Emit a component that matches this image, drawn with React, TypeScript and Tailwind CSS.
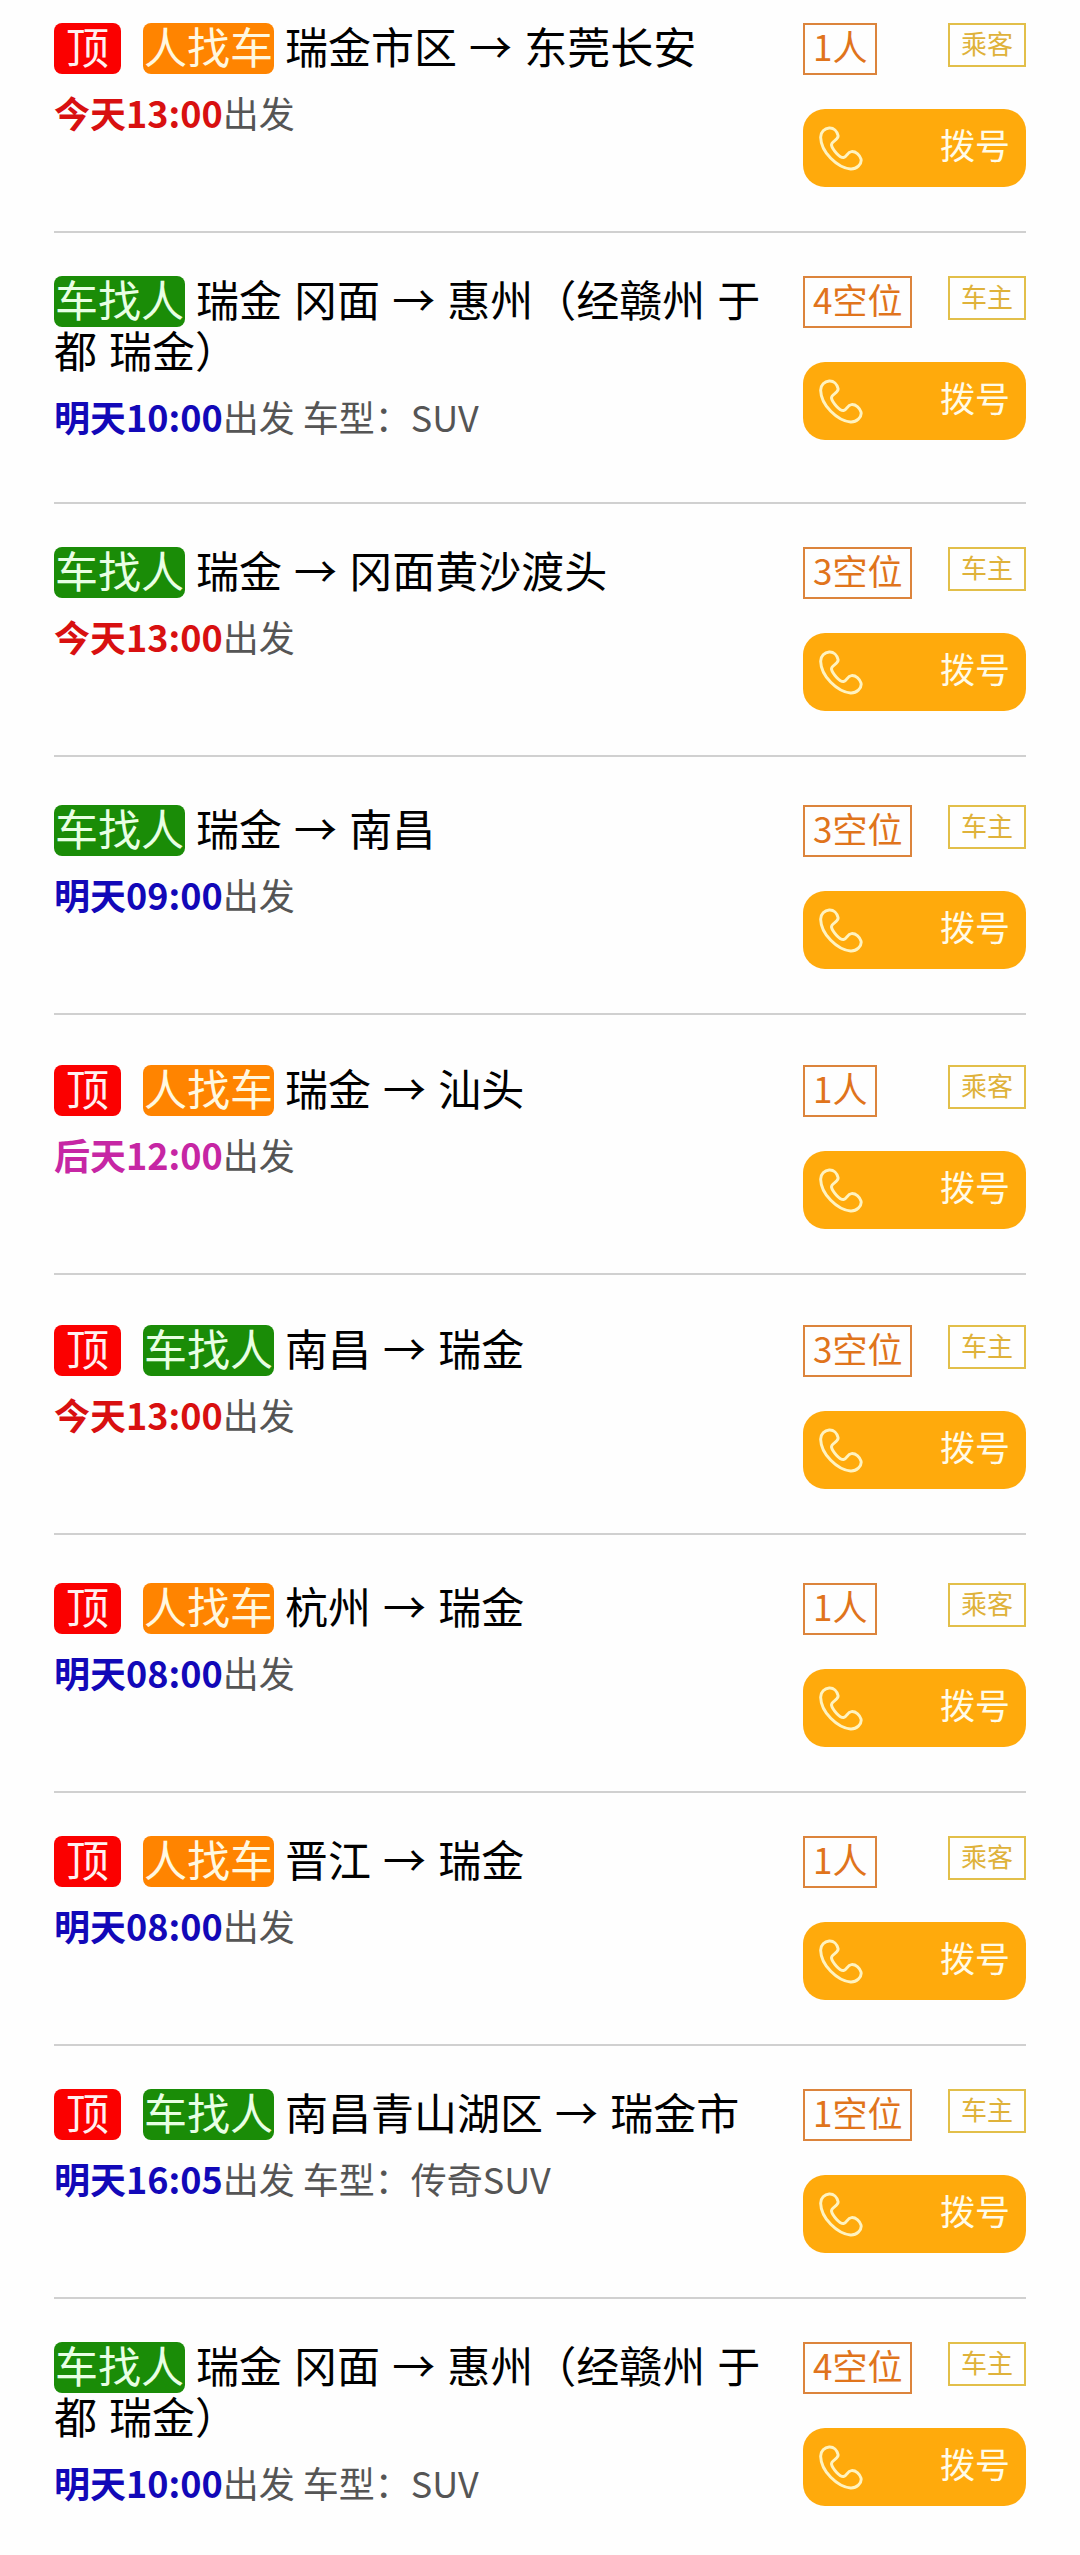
import React from 'react';
import clsx from 'clsx';

type Kind = 'passenger' | 'driver';
type Day = '今天' | '明天' | '后天';
type Gap = 'sm' | 'md' | 'lg';

interface Trip {
  id: number;
  kind: Kind;
  pinned?: boolean;
  from: string;
  to: string;
  day: Day;
  time: string;
  car?: string;
  count: number;
  gap: Gap;
}

const trips: Trip[] = [
  { id: 1, kind: 'passenger', pinned: true, from: '瑞金市区', to: '东莞长安', day: '今天', time: '13:00', count: 1, gap: 'sm' },
  { id: 2, kind: 'driver', from: '瑞金 冈面', to: '惠州（经赣州 于都 瑞金）', day: '明天', time: '10:00', car: 'SUV', count: 4, gap: 'sm' },
  { id: 3, kind: 'driver', from: '瑞金', to: '冈面黄沙渡头', day: '今天', time: '13:00', count: 3, gap: 'sm' },
  { id: 4, kind: 'driver', from: '瑞金', to: '南昌', day: '明天', time: '09:00', count: 3, gap: 'md' },
  { id: 5, kind: 'passenger', pinned: true, from: '瑞金', to: '汕头', day: '后天', time: '12:00', count: 1, gap: 'lg' },
  { id: 6, kind: 'driver', pinned: true, from: '南昌', to: '瑞金', day: '今天', time: '13:00', count: 3, gap: 'lg' },
  { id: 7, kind: 'passenger', pinned: true, from: '杭州', to: '瑞金', day: '明天', time: '08:00', count: 1, gap: 'md' },
  { id: 8, kind: 'passenger', pinned: true, from: '晋江', to: '瑞金', day: '明天', time: '08:00', count: 1, gap: 'sm' },
  { id: 9, kind: 'driver', pinned: true, from: '南昌青山湖区', to: '瑞金市', day: '明天', time: '16:05', car: '传奇SUV', count: 1, gap: 'sm' },
  { id: 10, kind: 'driver', from: '瑞金 冈面', to: '惠州（经赣州 于都 瑞金）', day: '明天', time: '10:00', car: 'SUV', count: 4, gap: 'sm' },
];

const dayColor: Record<Day, string> = {
  今天: 'text-[#d81010]',
  明天: 'text-[#1208b8]',
  后天: 'text-[#c626a4]',
};

const gapClass: Record<Gap, string> = {
  sm: 'pt-[43px]',
  md: 'pt-12',
  lg: 'pt-[50px]',
};

const PhoneIcon = () => (
  <svg viewBox="56 78 134 137" className="h-[45px] w-11 shrink-0" fill="none" stroke="#fff3c0" strokeWidth="9" strokeLinejoin="round" aria-hidden="true">
    <path d="M87 84C101 83 111 94 114 107C117 120 93 124 94 136C96 149 120 176 131 174C141 172 142 157 155 156C168 155 180 166 184 179C187 195 170 210 152 209C112 205 62 158 61 112C61 96 73 85 87 84Z" />
  </svg>
);

function TripRow({ trip }: { trip: Trip }) {
  const isDriver = trip.kind === 'driver';

  return (
    <li className={clsx('flex gap-8 border-b-2 border-[#d0d0d0] pb-11 first:pt-[23px] last:border-b-0 last:pb-8', gapClass[trip.gap])}>
      <div className="min-w-0 flex-1">
        <h2 className="font-['Inter','Noto_Sans_CJK_SC',sans-serif] text-[43px] leading-[51px] text-black">
          {trip.pinned && <span className="mr-[22px] inline-block rounded-lg bg-[#fb0000] px-3 align-top text-[#fff0f0]">顶</span>}
          <span className={clsx('mr-[11px] inline-block rounded-lg px-px align-top', isDriver ? 'bg-[#1a8c07] text-[#e8ffe4]' : 'bg-[#ff8400] text-[#fff8e0]')}>
            {isDriver ? '车找人' : '人找车'}
          </span>
          {trip.from} <span className="font-['Noto_Sans_CJK_SC',sans-serif] leading-none">→</span> {trip.to}
        </h2>
        <p className="mt-3.5 mb-[18px] text-[36px] leading-[48px] text-[#555]">
          <b className={clsx('font-bold', dayColor[trip.day])}>{trip.day}{trip.time}</b>
          出发{trip.car && ` 车型：${trip.car}`}
        </p>
      </div>

      {/* Seats, role and dial button */}
      <div className="flex w-[223px] shrink-0 flex-col">
        <div className="flex items-start justify-between">
          <span className="border-2 border-[#dc843c] px-2 pb-1.5 text-[35px] leading-[42px] text-[#e0741c]">
            {trip.count}{isDriver ? '空位' : '人'}
          </span>
          <span className="border-2 border-[#e2bf4a] px-[11px] pb-1 text-[26px] leading-9 text-[#dfb23a]">{isDriver ? '车主' : '乘客'}</span>
        </div>
        <button type="button" className="mt-[34px] flex h-[78px] items-center justify-between rounded-[22px] bg-[#ffaa0c] px-4 text-[35px] text-[#fffbe8]">
          <PhoneIcon />
          <span className="pb-2">拨号</span>
        </button>
      </div>
    </li>
  );
}

export default function App() {
  return (
    <main className="min-h-screen bg-[#fefefe] px-[54px] font-['Noto_Sans_CJK_SC',sans-serif]">
      <ul>
        {trips.map(trip => <TripRow key={trip.id} trip={trip} />)}
      </ul>
    </main>
  );
}
